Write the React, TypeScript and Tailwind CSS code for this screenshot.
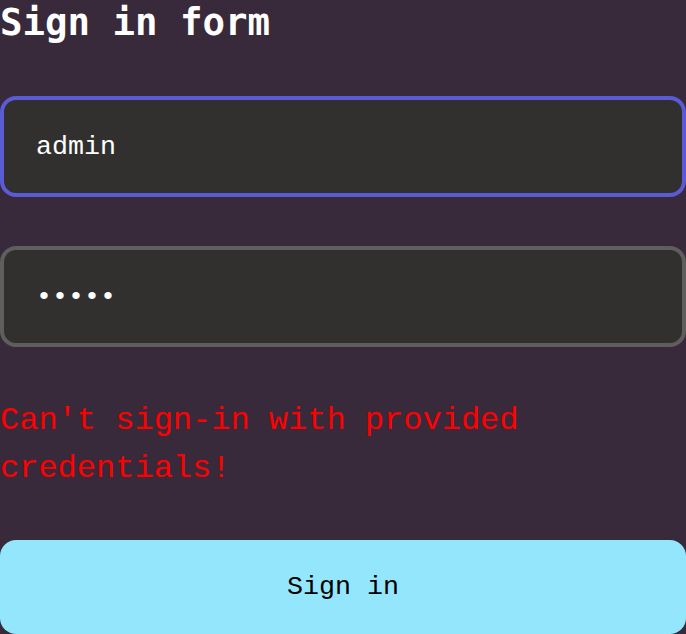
export default function App() {
  return (
    <div className="w-[686px] h-[634px] overflow-hidden bg-[#38293b] flex flex-col" style={{ fontFamily: '"Liberation Mono", monospace' }}>
      <h1 className="text-[37.4px] leading-[45px] font-bold text-white m-0" style={{ fontFamily: '"DejaVu Sans Mono", monospace' }}>Sign in form</h1>
      <div className="mt-[51px] h-[101px] rounded-[16px] border-4 border-[#5b5bd6] bg-[#31302e] flex items-center pl-[32px] text-[26.67px] text-white">
        admin
      </div>
      <div className="mt-[49px] h-[101px] rounded-[16px] border-4 border-[#5f5e5d] bg-[#31302e] flex items-center pl-[32px] text-[26.67px] text-white">
        •••••
      </div>
      <p className="mt-[50px] text-[32px] leading-[48px] text-[#ff0000] m-0">
        Can't sign-in with provided credentials!
      </p>
      <div className="mt-[47px] h-[94px] shrink-0 rounded-[16px] bg-[#94e6fc] flex items-center justify-center text-[26.67px] text-black">
        Sign in
      </div>
    </div>
  );
}
